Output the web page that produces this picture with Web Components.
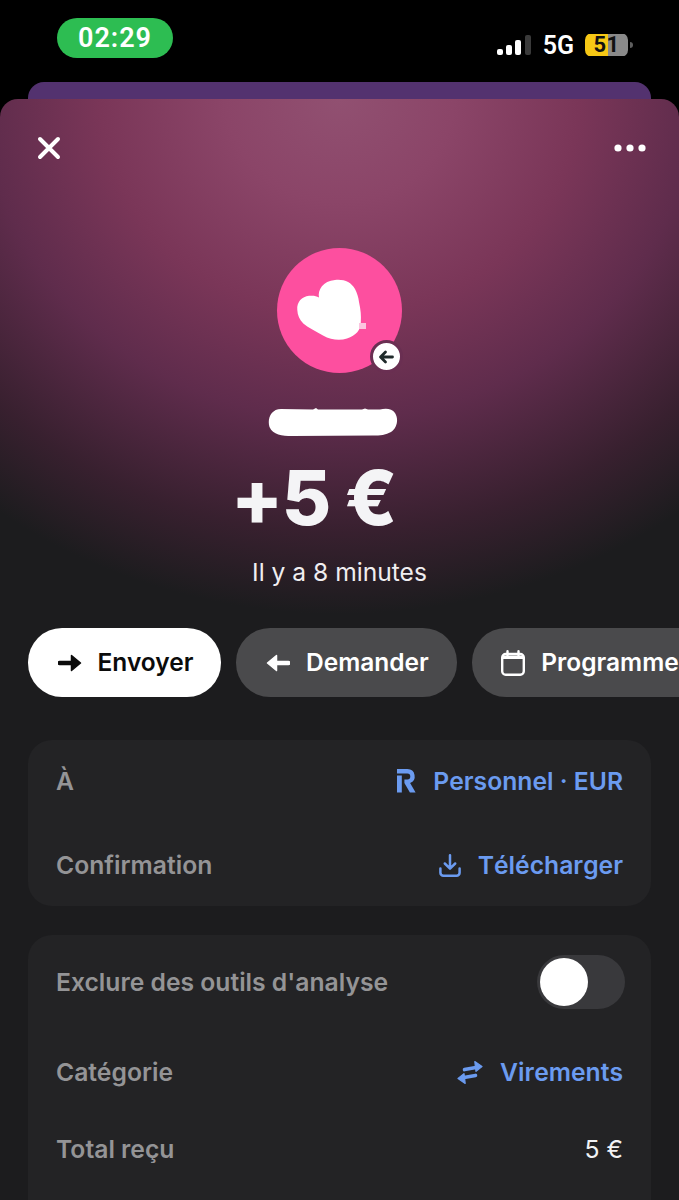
<!DOCTYPE html>
<html lang="fr">
<head>
<meta charset="utf-8">
<title>Transaction</title>
<style>
  html, body { margin: 0; height: 1200px; overflow: hidden; background: #000; }
  body { font-family: Inter, "Liberation Sans", sans-serif; }
</style>
</head>
<body>
<status-bar></status-bar>
<tx-sheet>
  <tx-hero amount="+5 €" time="Il y a 8 minutes"></tx-hero>
  <action-row>
    <action-pill primary>
      <svg slot="icon" width="24" height="18" viewBox="0 0 24 18"><path d="M1.500 9H15" stroke="currentColor" stroke-width="4.400" stroke-linecap="round"/><path d="M13.500 1.500 22.500 9l-9 7.500z" fill="currentColor" stroke="currentColor" stroke-width="1.500" stroke-linejoin="round"/></svg>
      Envoyer
    </action-pill>
    <action-pill>
      <svg slot="icon" width="24" height="18" viewBox="0 0 24 18"><path d="M22.500 9H9" stroke="currentColor" stroke-width="4.400" stroke-linecap="round"/><path d="M10.500 1.500 1.500 9l9 7.500z" fill="currentColor" stroke="currentColor" stroke-width="1.500" stroke-linejoin="round"/></svg>
      Demander
    </action-pill>
    <action-pill>
      <svg slot="icon" width="24" height="26" viewBox="0 0 24 26"><rect x="1.200" y="4" width="21.600" height="20.800" rx="3.500" fill="none" stroke="currentColor" stroke-width="2.400"/><path d="M1.500 5.500h21V9h-21z" fill="currentColor"/><path d="M6.500 1.200v4M17.500 1.200v4" stroke="currentColor" stroke-width="2.400" stroke-linecap="round"/></svg>
      Programmer
    </action-pill>
  </action-row>
  <detail-card gap="56" pad="27">
    <detail-row label="À">
      <svg slot="icon" width="19" height="24" viewBox="0 0 19 24"><path d="M0 0h10.500a7.200 7.200 0 0 1 2.600 13.900L18.600 23.500h-5.700L7.400 14v-3.600h3a2.900 2.900 0 0 0 0-5.800H0z" fill="currentColor"/><path d="M0 6.500h4.800v17H0z" fill="currentColor"/></svg>
      Personnel · EUR
    </detail-row>
    <detail-row label="Confirmation">
      <svg slot="icon" width="22" height="23" viewBox="0 0 22 23"><path d="M11 1.300v13M5.800 9.500 11 14.600l5.200-5.100M1.400 14.500v4.200a3 3 0 0 0 3 3h13.200a3 3 0 0 0 3-3v-4.200" fill="none" stroke="currentColor" stroke-width="2.500" stroke-linecap="round" stroke-linejoin="round"/></svg>
      Télécharger
    </detail-row>
  </detail-card>
  <detail-card gap="49" pad="20" tail="120">
    <detail-row label="Exclure des outils d'analyse" plain><toggle-switch></toggle-switch></detail-row>
    <detail-row label="Catégorie">
      <svg slot="icon" width="26" height="25" viewBox="0 0 26 25"><path d="M7.500 9.600 19 7.600" stroke="currentColor" stroke-width="3.600" stroke-linecap="round"/><path d="M17.800 1.600 25 6.600l-6 4.800z" fill="currentColor" stroke="currentColor" stroke-width="1.200" stroke-linejoin="round"/><path d="M18.500 15.400 7 17.400" stroke="currentColor" stroke-width="3.600" stroke-linecap="round"/><path d="M8.200 23.400 1 18.400l6-4.800z" fill="currentColor" stroke="currentColor" stroke-width="1.200" stroke-linejoin="round"/></svg>
      Virements
    </detail-row>
    <detail-row label="Total reçu" plain><span>5 €</span></detail-row>
  </detail-card>
</tx-sheet>

<script>
class StatusBar extends HTMLElement {
  constructor() {
    super();
    this.attachShadow({ mode: 'open' }).innerHTML = `
<style>
  :host { display: block; height: 82px; box-sizing: border-box; padding: 18px 46px 0 57px; }
  .wrap { display: flex; justify-content: space-between; align-items: flex-start; }
  .time {
    width: 116px; height: 40px; border-radius: 20px; background: #2dbd52; color: #fff;
    display: flex; align-items: center; justify-content: center;
    font: 600 27px/1 Roboto, "Liberation Sans", sans-serif; letter-spacing: 1px;
  }
  .right { display: flex; align-items: center; margin-top: 15px; height: 24px; }
  .net { font: 600 25px/1 Roboto, "Liberation Sans", sans-serif; color: #fff; margin: 0 11px 0 12px; }
  .batt {
    width: 43px; height: 24px; border-radius: 7px;
    background: linear-gradient(90deg, #f7c815 0 23px, #8a8a8a 23px) center / 100% 22px no-repeat;
    display: flex; align-items: center; justify-content: center;
    font: 700 22px/24px Roboto, "Liberation Sans", sans-serif; color: #111; letter-spacing: .5px;
  }
  .nub { width: 3px; height: 6px; margin-left: 2px; background: #5e5e5e; border-radius: 0 3px 3px 0; }
</style>
<div class="wrap">
  <div class="time">02:29</div>
  <div class="right">
    <svg width="34" height="20" viewBox="0 0 34 20">
      <rect x="0" y="14" width="6" height="6" rx="2" fill="#fff"/>
      <rect x="9" y="10" width="6" height="10" rx="2" fill="#fff"/>
      <rect x="18" y="5" width="6" height="15" rx="2" fill="#fff"/>
      <rect x="28" y="0" width="6" height="20" rx="2" fill="#3a3a3a"/>
    </svg>
    <span class="net">5G</span>
    <span class="batt">51</span>
    <span class="nub"></span>
  </div>
</div>`;
  }
}

class TxSheet extends HTMLElement {
  constructor() {
    super();
    this.attachShadow({ mode: 'open' }).innerHTML = `
<style>
  :host { display: block; }
  .back { height: 17px; margin: 0 28px; background: #53326f; border-radius: 16px 16px 0 0; }
  .sheet {
    height: 1101px; overflow: hidden; border-radius: 18px 18px 0 0; background-color: #1c1c1e;
    background-image: radial-gradient(ellipse 570px 515px at 50% 0, #915071 0, #8b4568 20%, #7a3658 42%, #5f2c4c 62%, #38202f 84%, #1c1c1e 100%);
    background-repeat: no-repeat;
  }
</style>
<div class="back"></div>
<div class="sheet"><slot></slot></div>`;
  }
}

class TxHero extends HTMLElement {
  constructor() {
    super();
    this.attachShadow({ mode: 'open' }).innerHTML = `
<style>
  :host { display: flex; flex-direction: column; align-items: center; }
  .top { align-self: stretch; display: flex; justify-content: space-between; align-items: center; padding: 36px 33px 0 37px; height: 26px; }
  .avatar { position: relative; width: 125px; height: 125px; margin: 87px 1px 0 0; border-radius: 50%; background: #fd4f9f; }
  .avatar svg.blob { display: block; }
  .badge {
    position: absolute; right: -1px; bottom: 0; width: 27px; height: 27px;
    border-radius: 50%; background: #fff; border: 3px solid #6a2f52;
    display: flex; align-items: center; justify-content: center;
  }
  .name { display: block; margin: 35px 14px 0 0; }
  .amount { margin: 19px 52px 0 0; font: 800 76px/84px Inter, "Liberation Sans", sans-serif; color: #f4f4f6; letter-spacing: -1.500px; white-space: pre; }
  .time { margin-top: 19px; font: 400 24.600px/28px Inter, "Liberation Sans", sans-serif; color: #f0eef0; }
</style>
<div class="top">
  <svg width="24" height="24" viewBox="0 0 24 24"><path d="M3 3l18 18M21 3 3 21" stroke="#fff" stroke-width="4" stroke-linecap="round"/></svg>
  <svg width="32" height="8" viewBox="0 0 32 8" fill="#fff"><circle cx="4" cy="4" r="3.600"/><circle cx="16" cy="4" r="3.600"/><circle cx="28" cy="4" r="3.600"/></svg>
</div>
<div class="avatar">
  <svg class="blob" width="125" height="125" viewBox="0 0 125 125">
    <path d="M20.300 62C19.500 54 25 48.500 32 47.800C36 47.400 39 47.600 42 49.500C40.500 42 46 33 58 32C67 31 74 34 78 41C80 45 81.500 49 82 54C83.800 62 84.200 68 83.800 74C83.800 82 79 87.500 70 90.500C63 92.800 54 92 46 87.500C38 83 31 79.500 26.300 75.500C22.500 72 20.500 67 20.300 62Z" fill="#fff"/>
    <rect x="82" y="75" width="7" height="6" fill="#fbc4df"/>
  </svg>
  <div class="badge">
    <svg width="16" height="14" viewBox="0 0 16 14"><path d="M14.500 7H3.500M7.500 2 2.500 7l5 5" fill="none" stroke="#1f2a2a" stroke-width="2.800" stroke-linecap="round" stroke-linejoin="round"/></svg>
  </div>
</div>
<svg class="name" width="130" height="28" viewBox="0 0 130 28"><path d="M13 1L45 1.500 48 0 50 1.500 94 1.500 97 .5 100 1.500 112 1.500C117 0 124 0 127 5C131 11 129 20 123 24C118 27 112 27.500 105 27.500L24 28C14 28 5 27 1.500 19C-1 11 3 1 13 1Z" fill="#fff"/></svg>
<div class="amount"></div>
<div class="time"></div>`;
  }
  connectedCallback() {
    this.shadowRoot.querySelector('.amount').textContent = this.getAttribute('amount');
    this.shadowRoot.querySelector('.time').textContent = this.getAttribute('time');
  }
}

class ActionRow extends HTMLElement {
  constructor() {
    super();
    this.attachShadow({ mode: 'open' }).innerHTML = `
<style>
  :host { display: flex; gap: 15px; margin: 42px 0 43px; padding-left: 28px; overflow: hidden; }
</style>
<slot></slot>`;
  }
}

class ActionPill extends HTMLElement {
  constructor() {
    super();
    this.attachShadow({ mode: 'open' }).innerHTML = `
<style>
  :host {
    display: flex; flex: none; align-items: center; gap: 16px; height: 69px; padding: 0 28px 0 29.500px; box-sizing: border-box;
    border-radius: 34px; background: #4a4a4c; color: #fff; white-space: nowrap;
    font: 600 24.500px/1 Inter, "Liberation Sans", sans-serif;
  }
  :host([primary]) { background: #fff; color: #0b0b0b; }
  ::slotted(svg) { display: block; flex: none; }
</style>
<slot name="icon"></slot><slot></slot>`;
  }
}

class DetailCard extends HTMLElement {
  constructor() {
    super();
    this.attachShadow({ mode: 'open' }).innerHTML = `
<style>
  :host { display: flex; flex-direction: column; margin: 0 28px 29px; padding: var(--pad) 28px var(--tail, var(--pad)); border-radius: 24px; background: #232325; }
  .list { display: flex; flex-direction: column; gap: var(--gap); }
</style>
<div class="list"><slot></slot></div>`;
  }
  connectedCallback() {
    this.style.setProperty('--gap', this.getAttribute('gap') + 'px');
    this.style.setProperty('--pad', this.getAttribute('pad') + 'px');
    if (this.hasAttribute('tail')) this.style.setProperty('--tail', this.getAttribute('tail') + 'px');
  }
}

class DetailRow extends HTMLElement {
  constructor() {
    super();
    this.attachShadow({ mode: 'open' }).innerHTML = `
<style>
  :host { display: flex; align-items: center; justify-content: space-between; min-height: 28px; font: 600 24.700px/28px Inter, "Liberation Sans", sans-serif; color: #949496; }
  .value { display: flex; align-items: center; gap: 17px; color: #6b9bf0; font-kerning: none; }
  :host([plain]) .value { color: #f2f2f4; font-weight: 400; }
  ::slotted(svg) { display: block; flex: none; }
</style>
<span class="label"></span>
<span class="value"><slot name="icon"></slot><span><slot></slot></span></span>`;
  }
  connectedCallback() {
    this.shadowRoot.querySelector('.label').textContent = this.getAttribute('label');
  }
}

class ToggleSwitch extends HTMLElement {
  constructor() {
    super();
    this.attachShadow({ mode: 'open' }).innerHTML = `
<style>
  :host { display: block; width: 88px; height: 54px; margin-right: -2px; box-sizing: border-box; padding: 3px; border-radius: 27px; background: #39393c; }
  .knob { width: 48px; height: 48px; border-radius: 50%; background: #fff; }
</style>
<div class="knob"></div>`;
  }
}

customElements.define('status-bar', StatusBar);
customElements.define('tx-sheet', TxSheet);
customElements.define('tx-hero', TxHero);
customElements.define('action-row', ActionRow);
customElements.define('action-pill', ActionPill);
customElements.define('detail-card', DetailCard);
customElements.define('detail-row', DetailRow);
customElements.define('toggle-switch', ToggleSwitch);
</script>
</body>
</html>
